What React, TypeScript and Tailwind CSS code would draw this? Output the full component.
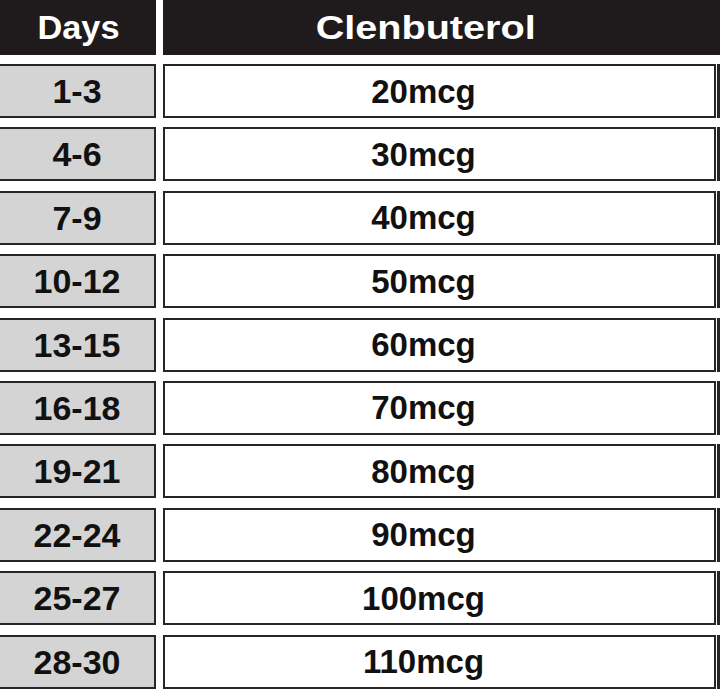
import React from "react";

const rows: [string, string][] = [
  ["1-3", "20mcg"],
  ["4-6", "30mcg"],
  ["7-9", "40mcg"],
  ["10-12", "50mcg"],
  ["13-15", "60mcg"],
  ["16-18", "70mcg"],
  ["19-21", "80mcg"],
  ["22-24", "90mcg"],
  ["25-27", "100mcg"],
  ["28-30", "110mcg"],
];

export default function App() {
  return (
    <div
      className="w-[720px] h-[694px] bg-white overflow-hidden font-bold"
      style={{ fontFamily: '"Liberation Sans", Arial, sans-serif' }}
    >
      <div className="flex h-[55px] gap-[7px]">
        <div className="w-[156px] bg-[#1f1b1c] flex items-center justify-center">
          <span className="text-white text-[33px] leading-none scale-x-[1.04]">Days</span>
        </div>
        <div className="flex-1 bg-[#1f1b1c] flex items-center justify-center pr-[32px]">
          <span className="text-white text-[33px] leading-none scale-x-[1.2]">Clenbuterol</span>
        </div>
      </div>
      <div className="mt-[9px] flex flex-col gap-[9.4px]">
        {rows.map(([d, v]) => (
          <div key={d} className="flex h-[54px]">
            <div className="w-[156px] bg-[#d4d4d4] border-2 border-l-0 border-[#262626] flex items-center justify-center">
              <span className="text-[#111] text-[34px] leading-none">{d}</span>
            </div>
            <div className="ml-[7px] w-[553px] bg-white border-2 border-[#262626] flex items-center justify-center pr-[32px]">
              <span className="text-[#111] text-[33px] leading-none">{v}</span>
            </div>
            <div className="ml-[1px] w-[3px] bg-[#262626]" />
          </div>
        ))}
      </div>
    </div>
  );
}
